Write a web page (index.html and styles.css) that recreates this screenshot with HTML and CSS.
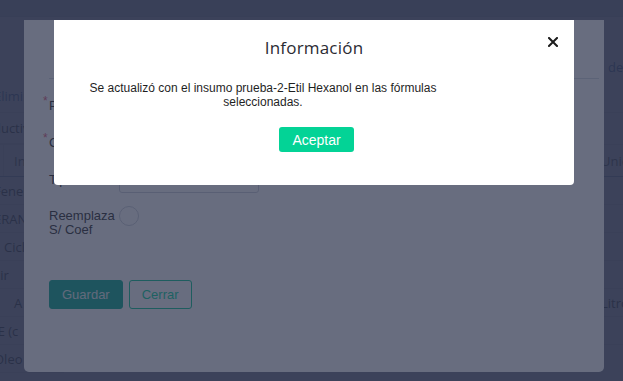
FILE: index.html
```html
<!DOCTYPE html>
<html lang="es">
<head>
    <meta charset="UTF-8">
    <meta name="viewport" content="width=device-width, initial-scale=1.0">
    <title>Fórmulas</title>
    <link rel="stylesheet" href="styles.css">
</head>
<body>
    <div class="page">
        <div class="page-top"></div>
        <div class="page-body">
            <div class="list list-left">
                <div class="list-row row-tall link">Eliminar</div>
                <div class="list-row row-mid"><span class="shift">Productivo</span></div>
                <div class="list-row row-head"><span class="cell-sep"></span>Insumo</div>
                <div class="list-row">Fenel (V</div>
                <div class="list-row">ERANOL</div>
                <div class="list-row indent">Ciclo</div>
                <div class="list-row">cir</div>
                <div class="list-row center">A</div>
                <div class="list-row">IE (c</div>
                <div class="list-row">Oleo</div>
            </div>
            <div class="list list-right">
                <div class="list-row row-first link">de</div>
                <div class="list-row row-gap"></div>
                <div class="list-row row-blank"></div>
                <div class="list-row row-head">Unidad</div>
                <div class="list-row"></div>
                <div class="list-row"></div>
                <div class="list-row"></div>
                <div class="list-row"></div>
                <div class="list-row">Litro</div>
                <div class="list-row"></div>
            </div>
        </div>
    </div>

    <div class="backdrop"></div>

    <div class="modal form-modal">
        <div class="form-tabs"></div>
        <div class="form-body">
            <div class="form-row">
                <span class="req">*</span>
                <label>Producto</label>
                <div class="field"></div>
            </div>
            <div class="form-row">
                <span class="req">*</span>
                <label>Cantidad</label>
                <div class="field"></div>
            </div>
            <div class="form-row">
                <span class="req"></span>
                <label>Tipo</label>
                <div class="field"><div class="input"></div></div>
            </div>
            <div class="form-row form-row-top">
                <span class="req"></span>
                <label class="label-wrap">Reemplaza S/ Coef</label>
                <div class="field"><span class="radio"></span></div>
            </div>
        </div>
        <div class="form-actions">
            <button class="btn btn-fill">Guardar</button>
            <button class="btn btn-outline">Cerrar</button>
        </div>
    </div>

    <div class="backdrop"></div>

    <div class="modal info-modal">
        <div class="info-header">
            <span></span>
            <h2 class="info-title">Información</h2>
            <button class="info-close" aria-label="Cerrar">
                <svg width="10" height="10" viewBox="0 0 10 10">
                    <path d="M1 1L9 9M9 1L1 9" stroke="#1b1b1b" stroke-width="2" stroke-linecap="square"/>
                </svg>
            </button>
        </div>
        <p class="info-text">Se actualizó con el insumo prueba-2-Etil Hexanol en las fórmulas seleccionadas.</p>
        <div class="info-actions">
            <button class="btn-accept">Aceptar</button>
        </div>
    </div>
</body>
</html>
```

FILE: styles.css
```css
body, html {
    margin: 0;
    padding: 0;
    width: 100%;
    height: 100%;
    overflow: hidden;
    font-family: "Liberation Sans", Arial, sans-serif;
}
.page {
    background-color: #ffffff;
    height: 100%;
    display: flex;
    flex-direction: column;
    font-family: "Open Sans", sans-serif;
    font-size: 13px;
    color: #333;
}
.page-top {
    height: 16px;
    background-color: #dcdfe5;
    border-bottom: 1px solid #cfd3db;
}
.page-body {
    flex: 1;
    display: flex;
    justify-content: space-between;
}
.list {
    display: flex;
    flex-direction: column;
    white-space: nowrap;
    overflow: hidden;
}
.list-left {
    width: 70px;
    margin-left: -6px;
    padding-top: 63px;
}
.list-right {
    width: 30px;
    padding-top: 33px;
}
.list-row {
    height: 27px;
    display: flex;
    align-items: center;
    border-bottom: 1px solid #e6e8ee;
}
.list-right .list-row {
    padding-left: 8px;
}
.row-tall { height: 32px; }
.row-mid { height: 30px; }
.shift { margin-left: -22px; }
.list-right .row-first {
    height: 34px;
    border-bottom: none;
    padding-left: 15px;
}
.row-gap { height: 28px; }
.row-blank { height: 31px; border-bottom: none; }
.row-head {
    height: 31px;
    border-top: 1px solid #e6e8ee;
    border-bottom: 1px solid #9aa6c8;
    color: #555;
}
.cell-sep {
    width: 1px;
    align-self: stretch;
    background-color: #e6e8ee;
    margin: 0 10px 0 9px;
}
.indent { padding-left: 10px; }
.center { padding-left: 20px; }
.link { color: #4a6aa8; }

.backdrop {
    position: fixed;
    inset: 0;
    background-color: rgba(42, 49, 75, 0.71);
}
.modal {
    position: absolute;
    top: 20px;
    background-color: #fff;
    border-radius: 0 0 5px 5px;
    box-sizing: border-box;
}

/* formulario detras */
.form-modal {
    left: 24px;
    width: 580px;
    height: 352px;
    padding: 0 5px 0 19px;
}
.form-tabs {
    height: 58px;
    margin-left: 6px;
    border-bottom: 1px solid #d7dbe2;
}
.form-body {
    padding-top: 12px;
    display: flex;
    flex-direction: column;
    gap: 9px;
}
.form-row {
    display: grid;
    grid-template-columns: 6px 70px 140px;
    align-items: center;
    height: 28px;
    font-size: 13px;
    color: #2a2a2a;
}
.form-row-top {
    align-items: start;
}
.req {
    color: #e05a7a;
    font-size: 12px;
    align-self: start;
    margin-top: 3px;
}
.label-wrap {
    width: 64px;
    line-height: 14px;
    padding-top: 7px;
}
.input {
    height: 26px;
    border: 1px solid #ccd0d8;
    border-radius: 3px;
}
.radio {
    display: block;
    width: 18px;
    height: 18px;
    margin-top: 4px;
    border: 1px solid #ccd0d8;
    border-radius: 50%;
}
.form-actions {
    display: flex;
    gap: 6px;
    margin: 50px 0 0 6px;
}
.btn {
    height: 29px;
    padding: 0 12px;
    border-radius: 3px;
    font-family: "Liberation Sans", Arial, sans-serif;
    font-size: 13px;
}
.btn-fill {
    background-color: #00aa8e;
    border: 1px solid #00aa8e;
    color: #e8f2f2;
}
.btn-outline {
    background-color: #fff;
    border: 1px solid #00c792;
    color: #00d69c;
}

/* aviso */
.info-modal {
    left: 54px;
    width: 520px;
    padding: 16px 16px 33px;
    border-radius: 0 0 4px 4px;
}
.info-header {
    display: grid;
    grid-template-columns: 1fr auto 1fr;
    align-items: center;
    height: 20px;
}
.info-title {
    margin: 0;
    font-family: "Open Sans", sans-serif;
    font-size: 17px;
    font-weight: 400;
    color: #2b2b33;
    letter-spacing: 0.2px;
}
.info-close {
    justify-self: end;
    align-self: start;
    margin-top: 1px;
    background: none;
    border: none;
    padding: 0;
    display: flex;
    cursor: pointer;
}
.info-text {
    width: 386px;
    margin: 25px 0 0;
    font-size: 12px;
    line-height: 14px;
    text-align: center;
    color: #1f1f1f;
}
.info-actions {
    display: flex;
    justify-content: center;
    margin-top: 18px;
    padding-left: 5px;
}
.btn-accept {
    width: 75px;
    height: 25px;
    padding: 0;
    border: none;
    border-radius: 3px;
    background-color: #03d396;
    color: #fff;
    font-family: "Liberation Sans", Arial, sans-serif;
    font-size: 14px;
    cursor: pointer;
}
```
